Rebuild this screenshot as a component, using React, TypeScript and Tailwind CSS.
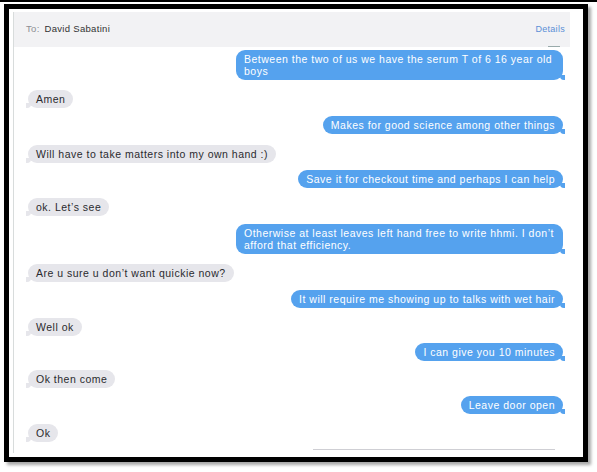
import React from "react";

type Msg = { me: boolean; lines: string[]; gap: string };

const messages: Msg[] = [
  { me: true, lines: ["Between the two of us we have the serum T of 6 16 year old", "boys"], gap: "mt-[3px]" },
  { me: false, lines: ["Amen"], gap: "mt-[10px]" },
  { me: true, lines: ["Makes for good science among other things"], gap: "mt-[8px]" },
  { me: false, lines: ["Will have to take matters into my own hand :)"], gap: "mt-[11px]" },
  { me: true, lines: ["Save it for checkout time and perhaps I can help"], gap: "mt-[7px]" },
  { me: false, lines: ["ok. Let\u2019s see"], gap: "mt-[10px]" },
  { me: true, lines: ["Otherwise at least leaves left hand free to write hhmi. I don\u2019t", "afford that efficiency."], gap: "mt-[8px]" },
  { me: false, lines: ["Are u sure u don\u2019t want quickie now?"], gap: "mt-[10px]" },
  { me: true, lines: ["It will require me showing up to talks with wet hair"], gap: "mt-[8px]" },
  { me: false, lines: ["Well ok"], gap: "mt-[10px]" },
  { me: true, lines: ["I can give you 10 minutes"], gap: "mt-[7px]" },
  { me: false, lines: ["Ok then come"], gap: "mt-[9px]" },
  { me: true, lines: ["Leave door open"], gap: "mt-[8px]" },
  { me: false, lines: ["Ok"], gap: "mt-[10px]" },
];

function Bubble({ m }: { m: Msg }) {
  const multi = m.lines.length > 1;
  return (
    <div className={`${m.gap} flex ${m.me ? "justify-end" : "justify-start"}`}>
      <div
        className={`relative rounded-[9px] px-[8px] py-[3px] text-[10.5px] leading-[12px] tracking-[0.5px] ${
          m.me ? "bg-[#55a2ee] text-white" : "bg-[#e6e6eb] text-[#2a2a2e]"
        } ${multi ? "w-[327px]" : ""}`}
      >
        {m.lines.map((l, i) => (
          <div key={i} className="whitespace-nowrap">
            {l}
          </div>
        ))}
        {m.me ? (
          <span className="absolute -right-[2px] bottom-0 h-[5px] w-[5px] rounded-bl-[4px] bg-[#55a2ee]" />
        ) : (
          <span className="absolute -left-[2px] bottom-0 h-[5px] w-[5px] rounded-br-[4px] bg-[#e6e6eb]" />
        )}
      </div>
    </div>
  );
}

export default function App() {
  return (
    <div
      className="w-[597px] h-[472px] bg-white flex flex-col overflow-hidden"
      style={{ fontFamily: '"Liberation Sans", Arial, sans-serif' }}
    >
      <div className="h-[2px] bg-black" />
      <div className="mt-[2px] ml-[4px] w-[584px] h-[458px] border-[5px] border-black shadow-[3px_3px_3px_rgba(0,0,0,0.35)] flex flex-col">
        <div className="mt-[3px] ml-[4px] w-[557px] flex-1 mb-[4px] border-l border-[#d8dcdc] flex flex-col">
          {/* Header */}
          <div className="h-[35px] bg-[#f2f2f4] flex items-center justify-between pl-[12px] pr-[5px] text-[9.5px] tracking-[0.3px] relative">
            <div className="flex items-center gap-[5px]">
              <span className="text-[#8e8e93]">To:</span>
              <span className="text-[#333]">David Sabatini</span>
            </div>
            <span className="text-[#5a8fd6] text-[9px] tracking-[0.3px]">Details</span>
            <span className="absolute right-[10px] bottom-0 w-[12px] h-[1px] bg-[#9aa]" />
          </div>

          {/* Messages */}
          <div className="flex flex-col pl-[14px] pr-[7px]">
            {messages.map((m, i) => (
              <Bubble key={i} m={m} />
            ))}
            <div className="mt-[7px] ml-auto mr-[8px] w-[242px] h-[1px] bg-[#cfcfd4]" />
          </div>
        </div>
      </div>
    </div>
  );
}
